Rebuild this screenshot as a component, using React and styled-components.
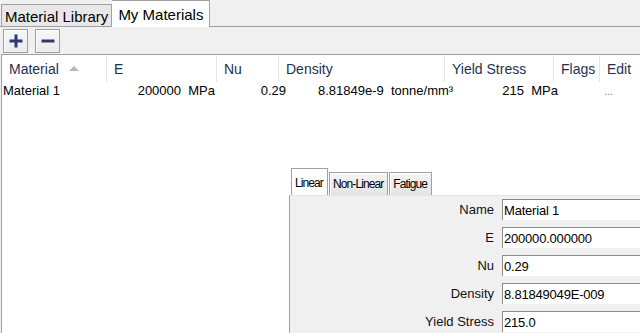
import React from "react";
import styled, { createGlobalStyle } from "styled-components";

const colors = {
  face: "#f0f0f0",
  border: "#a0a0a0",
  light: "#e5e5e5",
  header: "#1e3250",
  text: "#000000",
  icon: "#2f3b73",
};

const GlobalStyle = createGlobalStyle`
  html, body {
    margin: 0;
    padding: 0;
    background: ${colors.face};
    overflow: hidden;
  }
  * {
    box-sizing: border-box;
  }
`;

const Window = styled.div`
  width: 640px;
  height: 333px;
  display: flex;
  flex-direction: column;
  font-family: "Liberation Sans", Arial, sans-serif;
  background: ${colors.face};
`;

const TabStrip = styled.div`
  height: 27px;
  display: flex;
  align-items: flex-end;
  padding-left: 1px;
  border-bottom: 1px solid ${colors.border};
`;

const Tab = styled.div`
  font-size: 15px;
  color: #000;
  border: 1px solid ${colors.border};
  border-bottom: none;
  padding: 0 ${(p) => (p.$active ? "6px" : "3px")};
  height: ${(p) => (p.$active ? "27px" : "22px")};
  line-height: ${(p) => (p.$active ? "27px" : "23px")};
  margin-bottom: ${(p) => (p.$active ? "-1px" : "0")};
  background: ${(p) => (p.$active ? "#ffffff" : "#e8e8e8")};
  border-left: ${(p) => (p.$active ? "none" : `1px solid ${colors.border}`)};
  white-space: nowrap;
`;

const Toolbar = styled.div`
  height: 27px;
  display: flex;
  align-items: center;
  gap: 7px;
  padding-left: 3px;
`;

const ToolButton = styled.button`
  width: 25px;
  height: 24px;
  padding: 0;
  display: flex;
  align-items: center;
  justify-content: center;
  background: linear-gradient(#f7f7f7, #ececec);
  border: 1px solid #9e9e9e;
  box-shadow: inset 1px 1px 0 #ffffff;
  border-radius: 0;
`;

const ListView = styled.div`
  flex: 1;
  position: relative;
  background: #ffffff;
  border-top: 1px solid ${colors.border};
  border-left: 1px solid ${colors.border};
  margin-left: 1px;
  overflow: hidden;
`;

const HeaderRow = styled.div`
  display: grid;
  grid-template-columns: 105px 110px 62px 166px 109px 46px 1fr;
  height: 26px;
  margin-top: 1px;
`;

const HeaderCell = styled.div`
  display: flex;
  align-items: center;
  gap: 10px;
  padding-left: 7px;
  font-size: 14px;
  color: ${colors.header};
  border-right: ${(p) => (p.$last ? "none" : `1px solid ${colors.light}`)};
  white-space: nowrap;
`;

const SortArrow = styled.span`
  width: 0;
  height: 0;
  border-left: 5px solid transparent;
  border-right: 5px solid transparent;
  border-bottom: 5px solid #b7b7b7;
  margin-top: -2px;
`;

const DataRow = styled.div`
  display: grid;
  grid-template-columns: 109px 104px 72px 164px 109px 40px 1fr;
  height: 17px;
  align-items: center;
  font-size: 13px;
  color: ${colors.text};
`;

const DataCell = styled.div`
  text-align: ${(p) => p.$align || "left"};
  padding-left: ${(p) => p.$pl || 0}px;
  padding-right: ${(p) => p.$pr || 0}px;
  white-space: pre;
  overflow: visible;
`;

const EditDots = styled.span`
  color: #777;
  font-size: 11px;
`;

const PropertyPanel = styled.div`
  position: absolute;
  left: 287px;
  top: 112px;
  right: 0;
  bottom: 0;
  display: flex;
  flex-direction: column;
`;

const PanelTabs = styled.div`
  display: flex;
  align-items: flex-end;
  height: 28px;
  padding-left: 2px;
  gap: 1px;
`;

const PanelTab = styled.div`
  font-family: "Liberation Sans", Arial, sans-serif;
  font-size: 12px;
  letter-spacing: -0.9px;
  color: #000;
  height: ${(p) => (p.$active ? "28px" : "23px")};
  line-height: ${(p) => (p.$active ? "28px" : "23px")};
  padding: 0 4px 0 3px;
  background: ${(p) =>
    p.$active ? "#ffffff" : "linear-gradient(#f4f4f4, #e4e4e4)"};
  border: 1px solid ${colors.border};
  border-bottom: none;
  box-shadow: inset 1px 1px 0 #fff;
  margin-bottom: ${(p) => (p.$active ? "-1px" : "0")};
`;

const PanelBody = styled.div`
  flex: 1;
  background: ${colors.face};
  border-left: 1px solid ${colors.border};
  border-top: 1px solid #e4e4e4;
  display: grid;
  grid-template-columns: 204px 160px;
  grid-auto-rows: 21px;
  column-gap: 8px;
  row-gap: 7px;
  padding-top: 3px;
  align-items: center;
  overflow: hidden;
`;

const FieldLabel = styled.label`
  font-size: 13px;
  color: #111;
  text-align: right;
`;

const FieldInput = styled.input`
  height: 21px;
  width: 160px;
  font-family: "Liberation Sans", Arial, sans-serif;
  font-size: 13px;
  letter-spacing: -0.2px;
  padding: 1px 1px 0;
  color: #000;
  background: #ffffff;
  border: none;
  border-top: 1px solid #8a8a8a;
  border-left: 1px solid #8a8a8a;
  outline: none;
`;

const PlusIcon = () => (
  <svg width="16" height="16" viewBox="0 0 16 16">
    <path d="M8 1.5v13M1.5 8h13" stroke={colors.icon} strokeWidth="3" />
  </svg>
);

const MinusIcon = () => (
  <svg width="16" height="16" viewBox="0 0 16 16">
    <path d="M1.5 8h13" stroke={colors.icon} strokeWidth="3" />
  </svg>
);

const fields = [
  ["Name", "Material 1"],
  ["E", "200000.000000"],
  ["Nu", "0.29"],
  ["Density", "8.81849049E-009"],
  ["Yield Stress", "215.0"],
];

export default function App() {
  return (
    <Window>
      <GlobalStyle />
      <TabStrip>
        <Tab>Material Library</Tab>
        <Tab $active>My Materials</Tab>
      </TabStrip>
      <Toolbar>
        <ToolButton type="button">
          <PlusIcon />
        </ToolButton>
        <ToolButton type="button">
          <MinusIcon />
        </ToolButton>
      </Toolbar>
      <ListView>
        <HeaderRow>
          <HeaderCell>
            Material <SortArrow />
          </HeaderCell>
          <HeaderCell>E</HeaderCell>
          <HeaderCell>Nu</HeaderCell>
          <HeaderCell>Density</HeaderCell>
          <HeaderCell>Yield Stress</HeaderCell>
          <HeaderCell>Flags</HeaderCell>
          <HeaderCell $last>Edit</HeaderCell>
        </HeaderRow>
        <DataRow>
          <DataCell $pl={1}>Material 1</DataCell>
          <DataCell $align="right">200000  MPa</DataCell>
          <DataCell $align="right" $pr={1}>0.29</DataCell>
          <DataCell $pl={31}>
            8.81849e-9  tonne/mm³
          </DataCell>
          <DataCell $align="right" $pr={2}>215  MPa</DataCell>
          <DataCell />
          <DataCell $pl={4}>
            <EditDots>...</EditDots>
          </DataCell>
        </DataRow>

        <PropertyPanel>
          <PanelTabs>
            <PanelTab $active>Linear</PanelTab>
            <PanelTab>Non-Linear</PanelTab>
            <PanelTab>Fatigue</PanelTab>
          </PanelTabs>
          <PanelBody>
            {fields.map(([label, value]) => (
              <React.Fragment key={label}>
                <FieldLabel>{label}</FieldLabel>
                <FieldInput defaultValue={value} readOnly />
              </React.Fragment>
            ))}
          </PanelBody>
        </PropertyPanel>
      </ListView>
    </Window>
  );
}
